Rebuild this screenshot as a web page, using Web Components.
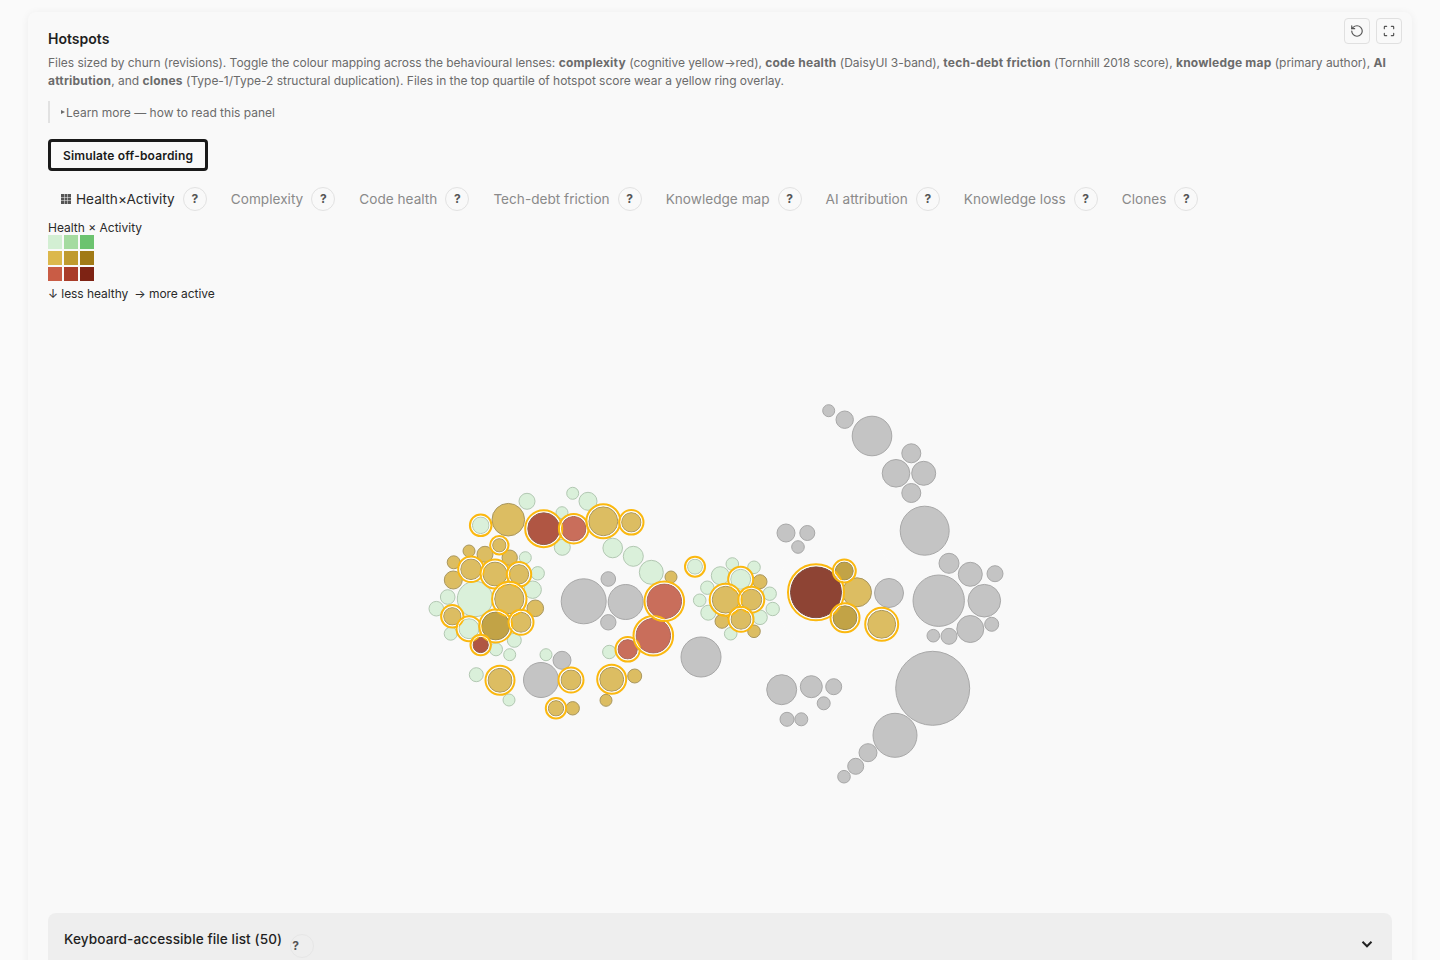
<!doctype html>
<html lang="en">
<head>
<meta charset="utf-8">
<title>Hotspots</title>
<style>
	html, body { margin: 0; height: 960px; overflow: hidden; background: #fafafa; }
	body { font-family: Inter, "Liberation Sans", sans-serif; color: #1f1f1f; padding: 12px 28px 0; box-sizing: border-box; }
	hotspots-panel b { letter-spacing: .2px; }
</style>
</head>
<body>
<hotspots-panel heading="Hotspots">
	<span slot="intro">Files sized by churn (revisions). Toggle the colour mapping across the behavioural lenses: <b>complexity</b> (cognitive yellow→red), <b>code health</b> (DaisyUI 3-band), <b>tech-debt friction</b> (Tornhill 2018 score), <b>knowledge map</b> (primary author), <b>AI</b> <b>attribution</b>, and <b>clones</b> (Type-1/Type-2 structural duplication). Files in the top quartile of hotspot score wear a yellow ring overlay.</span>
	<lens-tab active grid>Health×Activity</lens-tab>
	<lens-tab>Complexity</lens-tab>
	<lens-tab>Code health</lens-tab>
	<lens-tab>Tech-debt friction</lens-tab>
	<lens-tab>Knowledge map</lens-tab>
	<lens-tab>AI attribution</lens-tab>
	<lens-tab>Knowledge loss</lens-tab>
	<lens-tab>Clones</lens-tab>
</hotspots-panel>

<script>
class HelpButton extends HTMLElement {
	constructor() {
		super();
		this.attachShadow({ mode: "open" });
		this.shadowRoot.innerHTML = `
			<style>
				:host { display: inline-flex; align-items: center; justify-content: center; box-sizing: border-box; width: 24px; height: 24px; border: 1px solid #e2e2e2; border-radius: 50%; font-size: 12px; font-weight: 700; color: #555; line-height: 1; }
			</style>
			?
		`;
	}
}

class LensTab extends HTMLElement {
	constructor() {
		super();
		this.attachShadow({ mode: "open" });
		this.shadowRoot.innerHTML = `
			<style>
				:host { display: inline-flex; align-items: center; gap: 8px; padding: 0 12px; height: 24px; font-size: 13.6px; letter-spacing: .02px; color: #8a8a8a; white-space: nowrap; }
				:host([active]) { color: #2a2a2a; }
				.label { display: inline-flex; align-items: center; gap: 5px; }
				svg { display: none; margin-left: 1px; }
				:host([grid]) svg { display: block; }
			</style>
			<span class="label">
				<svg width="10" height="10" viewBox="0 0 10 10" fill="#555"><path d="M0 0h3v3H0zM3.500 0h3v3h-3zM7 0h3v3H7zM0 3.500h3v3H0zM3.500 3.500h3v3h-3zM7 3.500h3v3H7zM0 7h3v3H0zM3.500 7h3v3h-3zM7 7h3v3H7z"/></svg>
				<slot></slot>
			</span>
			<help-button></help-button>
		`;
	}
}

class BivariateLegend extends HTMLElement {
	constructor() {
		super();
		this.attachShadow({ mode: "open" });
		const colours = ["#d3efd3", "#a5dba0", "#6cc36f", "#dcb84c", "#bf9a2e", "#a17a16", "#c95c45", "#a93c29", "#7e2314"];
		this.shadowRoot.innerHTML = `
			<style>
				:host { display: block; font-size: 12px; line-height: 16px; color: #2a2a2a; }
				.title { height: 15px; }
				.grid { display: grid; grid-template-columns: repeat(3, 14px); grid-auto-rows: 14px; gap: 2px; }
				.axes { display: flex; gap: 6px; margin-top: 5px; letter-spacing: -.05px; }
			</style>
			<div class="title">Health × Activity</div>
			<div class="grid">${colours.map((c) => `<span style="background:${c}"></span>`).join("")}</div>
			<div class="axes"><span>↓ less healthy</span><span>→ more active</span></div>
		`;
	}
}

const TONES = {
	grey: ["#c4c4c4", "#a8a8a8"],
	green: ["#daf0da", "#b2c8b2"],
	gold: ["#dcbd62", "#a9975f"],
	dark: ["#c2a346", "#9c8a4f"],
	red: ["#c96e5b", "#a8695c"],
	brick: ["#b05643", "#94604f"],
	wine: ["#8e4434", "#7d4a3e"],
};

// [x, y, r, tone, ringed]
const BUBBLES = [
	[527, 501.3, 8, "green"], [572.7, 493.3, 6, "green"], [588, 501.3, 9, "green"], [508.3, 519.7, 16.3, "gold"],
	[480.7, 525.3, 8.3, "green", 1], [543.7, 528.7, 16, "brick", 1], [562, 512.7, 6, "green"], [573.7, 528.7, 12.3, "red", 1],
	[562.3, 547.3, 8, "green"], [603.3, 521.3, 14.5, "gold", 1], [631.3, 522.3, 9.7, "gold", 1], [499.3, 545.3, 6.7, "gold", 1],
	[612.7, 548, 9.800, "green"], [633.3, 556.3, 10, "green"], [651.3, 572.3, 12, "green"], [671, 577, 6, "gold"],
	[469, 551, 6, "gold"], [485, 554.3, 8, "gold"], [453.7, 562.3, 6.5, "gold"], [509.7, 557.7, 7.7, "gold"],
	[525.3, 557.7, 6, "green"], [471, 569.3, 10.3, "gold", 1], [495, 574, 12, "gold", 1], [519, 574.3, 9.7, "gold", 1],
	[537.7, 573.3, 6.7, "green"], [453.3, 580, 9, "gold"], [532.7, 589.7, 8.7, "green"], [447.7, 597, 7.3, "green"],
	[475, 599, 17.7, "green"], [509.3, 599, 14.7, "gold", 1], [535.3, 608.3, 8.3, "gold"], [436.3, 608.7, 7.3, "green"],
	[452.3, 616.3, 8.7, "gold", 1], [469, 628.7, 10, "green", 1], [495.7, 626, 14, "dark", 1], [521, 622.3, 10, "gold", 1],
	[450.7, 633.7, 6.5, "green"], [480.7, 645, 7.7, "brick", 1], [514.3, 640.3, 7, "green"], [496, 649.3, 6.5, "green"],
	[509.7, 654.7, 6, "green"], [546, 654.7, 6, "green"], [562, 660.3, 9, "grey"], [541, 680, 17.5, "grey"],
	[571, 680, 10, "gold", 1], [476.3, 674.7, 7, "green"], [500, 680.3, 12, "gold", 1], [509, 700, 6, "green"],
	[556, 708.3, 7.7, "gold", 1], [572.7, 708.3, 6.7, "gold"], [611.7, 679.3, 12, "gold", 1], [634.7, 676, 7, "gold"],
	[606, 700.3, 6, "gold"], [609.3, 652, 6.7, "green"], [627.7, 649.3, 9.7, "red", 1], [653.3, 635.7, 17.3, "red", 1],
	[664.3, 601.3, 17.3, "red", 1], [583.7, 601.3, 22.5, "grey"], [625.7, 602, 17.5, "grey"], [608.3, 579, 7.3, "grey"],
	[608.3, 622.3, 7.7, "grey"],
	[828.7, 410.7, 6, "grey"], [844.7, 419.7, 8.7, "grey"], [872, 436, 19.8, "grey"], [911.3, 453.3, 9.5, "grey"],
	[896, 473.3, 13.8, "grey"], [923.7, 473.3, 12, "grey"], [911.3, 493, 9.5, "grey"], [924.7, 530.7, 24.5, "grey"],
	[949, 563.3, 10, "grey"], [970.3, 574.3, 12, "grey"], [995, 573.7, 8, "grey"], [938.7, 600.7, 25.7, "grey"],
	[984.3, 600.7, 16.3, "grey"], [970.3, 629, 13.5, "grey"], [991.7, 624.3, 7, "grey"], [933.3, 635.7, 6.3, "grey"],
	[949, 636.3, 8, "grey"], [932.7, 688.3, 37, "grey"], [895, 735.3, 22, "grey"], [868, 752.7, 9, "grey"],
	[855.7, 766.3, 8, "grey"], [844, 776.7, 6.3, "grey"], [781.7, 689.7, 15, "grey"], [811.3, 686.7, 11, "grey"],
	[833.7, 686.7, 8, "grey"], [823.7, 703.3, 6.5, "grey"], [787, 719.3, 7, "grey"], [801.3, 719.3, 6.5, "grey"],
	[786, 533, 9, "grey"], [807.3, 533, 7.5, "grey"], [798, 547, 6.3, "grey"], [889, 593, 14.5, "grey"],
	[857, 592.3, 14.5, "gold"], [816, 592.3, 25.5, "wine", 1], [844.3, 571, 9, "dark", 1], [845, 617.7, 12, "dark", 1],
	[881.7, 624.3, 14, "gold", 1], [701, 657, 20, "grey"],
	[695, 566.7, 7.5, "green", 1], [732.3, 564, 6.3, "green"], [754, 567.3, 6.3, "green"], [720.3, 575.7, 9, "green"],
	[740.7, 579.3, 10, "green", 1], [760, 581.7, 7, "gold"], [707.3, 587.7, 6.7, "green"], [769.7, 593.7, 6.7, "green"],
	[699.7, 600.3, 6.3, "green"], [725.7, 599.7, 13.5, "gold", 1], [751.3, 599.7, 10.5, "gold", 1], [772.7, 609, 6.7, "green"],
	[708.3, 612.7, 7.5, "green"], [722, 621.3, 7, "gold"], [741, 619.3, 10, "gold", 1], [760, 617.3, 7.3, "green"],
	[730.7, 633.7, 6.3, "green"], [754, 631.3, 6.3, "gold"],
];

// faint enclosing directories behind the files
const GROUPS = [[553, 600, 136], [737, 598, 50], [838, 596, 62], [800, 700, 50], [960, 600, 60], [710, 600, 300]];

class HotspotChart extends HTMLElement {
	constructor() {
		super();
		this.attachShadow({ mode: "open" });
	}

	connectedCallback() {
		const groups = GROUPS.map(([x, y, r]) => `<circle cx="${x}" cy="${y}" r="${r}" fill="#fff" fill-opacity=".14"/>`).join("");
		const discs = BUBBLES.map(([x, y, r, tone]) => {
			const [fill, stroke] = TONES[tone];
			return `<circle cx="${x}" cy="${y}" r="${r}" fill="${fill}" stroke="${stroke}" stroke-width="1"/>`;
		}).join("");
		const rings = BUBBLES.filter((b) => b[4]).map(([x, y, r]) => `
			<circle cx="${x}" cy="${y}" r="${r + 1.100}" fill="none" stroke="#fff" stroke-width=".9"/>
			<circle cx="${x}" cy="${y}" r="${r + 2.500}" fill="none" stroke="#fbb80f" stroke-width="2"/>
		`).join("");
		this.shadowRoot.innerHTML = `
			<style>
				:host { display: block; height: 611px; }
				svg { display: block; width: 100%; height: 100%; }
			</style>
			<svg viewBox="48 302 1344 611" role="img" aria-label="Hotspot bubble chart">${groups}${discs}${rings}</svg>
		`;
	}
}

class FileListDisclosure extends HTMLElement {
	constructor() {
		super();
		this.attachShadow({ mode: "open" });
		this.shadowRoot.innerHTML = `
			<style>
				:host { display: block; background: #eeeeee; border-radius: 8px; height: 64px; padding: 16px 16px 0; box-sizing: border-box; position: relative; font-size: 13.6px; letter-spacing: .1px; font-weight: 500; color: #1f1f1f; }
				.title { display: flex; align-items: flex-start; gap: 8px; line-height: 20px; }
				help-button { margin-top: 5px; border-color: #e6e6e6; justify-content: flex-start; padding-left: 1px; }
				svg { position: absolute; right: 19px; top: 27px; }
			</style>
			<div class="title"><slot></slot><help-button></help-button></div>
			<svg width="12" height="9" viewBox="0 0 12 9" fill="none" stroke="#222" stroke-width="2"><path d="M1.500 1.800 6 6.300l4.500-4.500"/></svg>
		`;
	}
}

class HotspotsPanel extends HTMLElement {
	constructor() {
		super();
		this.attachShadow({ mode: "open" });
	}

	connectedCallback() {
		const heading = this.getAttribute("heading") || "";
		this.shadowRoot.innerHTML = `
			<style>
				:host { display: block; position: relative; background: #f9f9f9; border-radius: 8px; padding: 17px 20px 0; box-shadow: 0 1px 8px rgba(0,0,0,.06); min-height: 990px; box-sizing: border-box; }
				h2 { margin: 0; font-size: 14px; line-height: 20px; font-weight: 600; color: #1f1f1f; letter-spacing: .02px; }
				.intro { margin: 5px 0 0; font-size: 12px; line-height: 18px; color: #6b6b6b; letter-spacing: -.03px; }
				.more { margin-top: 11px; border-left: 2px solid #e2e2e2; height: 22px; padding-left: 11px; display: flex; align-items: center; font-size: 12px; color: #6b6b6b; }
				.caret { width: 0; height: 0; border-left: 4px solid #6b6b6b; border-top: 2.500px solid transparent; border-bottom: 2.500px solid transparent; margin-right: 1px; }
				button { display: block; margin-top: 16px; width: 160px; height: 32px; padding: 0; background: transparent; border: 3px solid #1a1a1a; border-radius: 4px; font: 600 12px Inter, "Liberation Sans", sans-serif; letter-spacing: .17px; color: #1a1a1a; }
				.tabs { display: flex; margin-top: 16px; }
				bivariate-legend { margin-top: 9px; }
				.tools { position: absolute; top: 6px; right: 10px; display: flex; gap: 6px; }
				.tool { width: 26px; height: 26px; box-sizing: border-box; border: 1px solid #e0e0e0; border-radius: 4px; display: flex; align-items: center; justify-content: center; }
				.tool svg { display: block; }
			</style>
			<div class="tools">
				<span class="tool"><svg width="14" height="14" viewBox="0 0 24 24" fill="none" stroke="#555" stroke-width="2" stroke-linecap="round" stroke-linejoin="round"><path d="M3 12a9 9 0 1 0 9-9 9.750 9.750 0 0 0-6.740 2.740L3 8"/><path d="M3 3v5h5"/></svg></span>
				<span class="tool"><svg width="14" height="14" viewBox="0 0 24 24" fill="none" stroke="#555" stroke-width="2" stroke-linecap="round" stroke-linejoin="round"><path d="M8 4H5a1 1 0 0 0-1 1v3"/><path d="M16 4h3a1 1 0 0 1 1 1v3"/><path d="M20 16v3a1 1 0 0 1-1 1h-3"/><path d="M8 20H5a1 1 0 0 1-1-1v-3"/></svg></span>
			</div>
			<h2>${heading}</h2>
			<p class="intro"><slot name="intro"></slot></p>
			<div class="more"><span class="caret"></span>Learn more — how to read this panel</div>
			<button type="button">Simulate off-boarding</button>
			<div class="tabs"><slot></slot></div>
			<bivariate-legend></bivariate-legend>
			<hotspot-chart></hotspot-chart>
			<file-list-disclosure>Keyboard-accessible file list (50)</file-list-disclosure>
		`;
	}
}

customElements.define("help-button", HelpButton);
customElements.define("lens-tab", LensTab);
customElements.define("bivariate-legend", BivariateLegend);
customElements.define("hotspot-chart", HotspotChart);
customElements.define("file-list-disclosure", FileListDisclosure);
customElements.define("hotspots-panel", HotspotsPanel);
</script>
</body>
</html>
